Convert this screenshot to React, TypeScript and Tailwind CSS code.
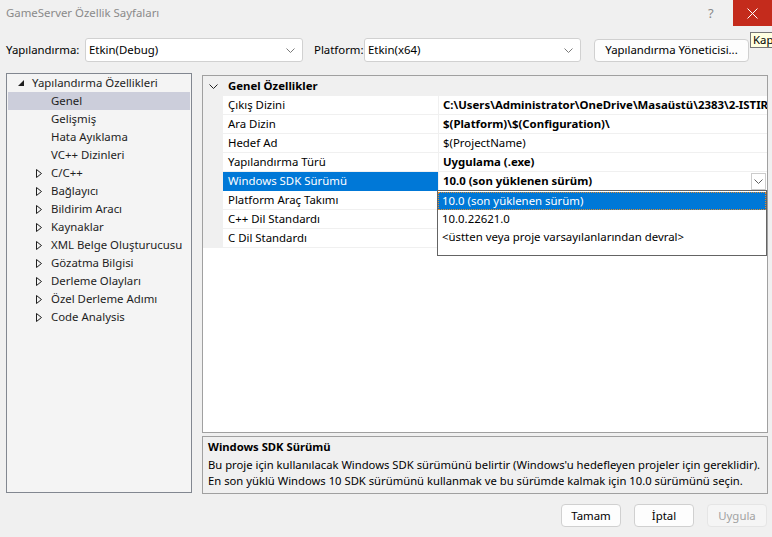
const treeItems: { label: string; level: 0 | 1; expandable: boolean; selected?: boolean }[] = [
  { label: "Yapılandırma Özellikleri", level: 0, expandable: true },
  { label: "Genel", level: 1, expandable: false, selected: true },
  { label: "Gelişmiş", level: 1, expandable: false },
  { label: "Hata Ayıklama", level: 1, expandable: false },
  { label: "VC++ Dizinleri", level: 1, expandable: false },
  { label: "C/C++", level: 1, expandable: true },
  { label: "Bağlayıcı", level: 1, expandable: true },
  { label: "Bildirim Aracı", level: 1, expandable: true },
  { label: "Kaynaklar", level: 1, expandable: true },
  { label: "XML Belge Oluşturucusu", level: 1, expandable: true },
  { label: "Gözatma Bilgisi", level: 1, expandable: true },
  { label: "Derleme Olayları", level: 1, expandable: true },
  { label: "Özel Derleme Adımı", level: 1, expandable: true },
  { label: "Code Analysis", level: 1, expandable: true },
];

const props: { name: string; value: string; bold: boolean; active?: boolean }[] = [
  {
    name: "Çıkış Dizini",
    value: "C:\\Users\\Administrator\\OneDrive\\Masaüstü\\2383\\2-ISTIRAK\\GameServer\\",
    bold: true,
  },
  { name: "Ara Dizin", value: "$(Platform)\\$(Configuration)\\", bold: true },
  { name: "Hedef Ad", value: "$(ProjectName)", bold: false },
  { name: "Yapılandırma Türü", value: "Uygulama (.exe)", bold: true },
  { name: "Windows SDK Sürümü", value: "10.0 (son yüklenen sürüm)", bold: true, active: true },
  { name: "Platform Araç Takımı", value: "", bold: false },
  { name: "C++ Dil Standardı", value: "", bold: false },
  { name: "C Dil Standardı", value: "", bold: false },
];

const Chevron = ({ className = "" }: { className?: string }) => (
  <svg width="9" height="5" viewBox="0 0 9 5" className={className}>
    <path d="M0.5 0.5 L4.5 4.5 L8.5 0.5" fill="none" stroke="currentColor" strokeWidth="1" />
  </svg>
);

const Combo = ({ text, width }: { text: string; width: string }) => (
  <div
    className={`${width} h-[24px] shrink-0 flex items-center justify-between bg-white border border-[#d1d1d1] rounded-[3px] pl-[3px] pr-[7px]`}
  >
    <span className="text-black">{text}</span>
    <Chevron className="text-[#7a7a7a]" />
  </div>
);

const Button = ({ label, disabled }: { label: string; disabled?: boolean }) => (
  <div
    className={`w-[60px] h-[23px] flex items-center justify-center rounded-[4px] border ${
      disabled ? "bg-[#f5f5f5] border-[#e5e5e5] text-[#a2a2a2]" : "bg-[#fdfdfd] border-[#d0d0d0] text-black"
    }`}
  >
    {label}
  </div>
);

export default function App() {
  return (
    <div className="w-[772px] h-[537px] relative overflow-hidden bg-[#f0f0f0] text-[11.4px] leading-[16px] font-['Noto_Sans',sans-serif] text-[#1e1e1e]">
      {/* title bar */}
      <div className="h-[26px] flex items-center">
        <span className="pl-[6px] text-[#8a8a8a] flex-1">GameServer Özellik Sayfaları</span>
        <span className="w-[14px] mr-[11px] text-[#8a8a8a] text-[13px]">?</span>
        <div className="w-[39px] h-[26px] bg-[#c42b1c] flex items-center justify-center">
          <svg width="11" height="11" viewBox="0 0 11 11">
            <path d="M0.5 0.5 L10.5 10.5 M10.5 0.5 L0.5 10.5" stroke="white" strokeWidth="1" />
          </svg>
        </div>
      </div>

      {/* configuration toolbar */}
      <div className="mt-[12px] h-[24px] flex items-center">
        <span className="w-[85px] shrink-0 pl-[6px] text-black whitespace-nowrap">Yapılandırma:</span>
        <Combo text="Etkin(Debug)" width="w-[218px]" />
        <span className="w-[61px] shrink-0 pl-[11px] text-black whitespace-nowrap">Platform:</span>
        <Combo text="Etkin(x64)" width="w-[217px]" />
        <div className="ml-[13px] w-[155px] shrink-0 h-[23px] flex items-center justify-center bg-[#fdfdfd] border border-[#d0d0d0] rounded-[4px] text-black whitespace-nowrap">
          Yapılandırma Yöneticisi...
        </div>
      </div>

      {/* main area */}
      <div className="mt-[11px] flex">
        <div className="ml-[6px] w-[186px] h-[420px] border border-[#828790] bg-[#f4f4f4] px-[1px]">
          {treeItems.map((item) => (
            <div
              key={item.label}
              className={`h-[18px] flex items-center ${item.selected ? "bg-[#cccedb]" : ""} ${
                item.level === 0 ? "pl-[10px]" : item.expandable ? "pl-[28px]" : "pl-[43px]"
              }`}
            >
              {item.level === 0 && (
                <svg width="6" height="6" viewBox="0 0 6 6" className="mr-[8px]">
                  <path d="M6 0 L6 6 L0 6 Z" fill="#1e1e1e" />
                </svg>
              )}
              {item.level === 1 && item.expandable && (
                <svg width="6" height="9" viewBox="0 0 6 9" className="mr-[9px]">
                  <path d="M0.5 0.5 L5.5 4.5 L0.5 8.5 Z" fill="none" stroke="#1e1e1e" strokeWidth="1" />
                </svg>
              )}
              <span className="whitespace-nowrap">{item.label}</span>
            </div>
          ))}
        </div>

        <div className="ml-[10px] w-[566px] pt-[2px] flex flex-col">
          {/* property grid */}
          <div className="h-[358px] border border-[#a0a0a0] bg-white flex flex-col">
            <div className="h-[20px] flex items-center bg-[#f0f0f0]">
              <Chevron className="ml-[6px] text-[#222222]" />
              <span className="ml-[10px] font-bold text-black">Genel Özellikler</span>
            </div>
            {props.map((p) => (
              <div key={p.name} className="h-[19px] flex">
                <div className="w-[20px] bg-[#f0f0f0]" />
                <div
                  className={`w-[215px] pl-[5px] flex items-center border-b whitespace-nowrap ${
                    p.active ? "bg-[#0078d7] text-white border-[#0078d7]" : "text-black border-[#f0f0f0]"
                  }`}
                >
                  {p.name}
                </div>
                <div className="flex-1 min-w-0 pl-[4px] pr-[1px] flex items-center justify-between border-l border-b border-[#f0f0f0] overflow-hidden text-black">
                  <span className={`whitespace-nowrap ${p.bold ? "font-bold" : ""}`}>{p.value}</span>
                  {p.active && (
                    <div className="w-[15px] h-[17px] shrink-0 border border-[#cccccc] bg-white flex items-center justify-center">
                      <Chevron className="text-[#606060]" />
                    </div>
                  )}
                </div>
              </div>
            ))}
          </div>

          {/* description */}
          <div className="mt-[3px] h-[58px] border border-[#a0a0a0] bg-[#f0f0f0] px-[5px] pt-[2px] text-black text-[11.25px]">
            <div className="font-bold mb-[2px]">Windows SDK Sürümü</div>
            <div className="whitespace-nowrap">
              Bu proje için kullanılacak Windows SDK sürümünü belirtir (Windows'u hedefleyen projeler için gereklidir).
            </div>
            <div className="whitespace-nowrap">
              En son yüklü Windows 10 SDK sürümünü kullanmak ve bu sürümde kalmak için 10.0 sürümünü seçin.
            </div>
          </div>
        </div>
      </div>

      {/* dialog buttons */}
      <div className="mt-[10px] flex justify-end gap-[13px] pr-[5px]">
        <Button label="Tamam" />
        <Button label="İptal" />
        <Button label="Uygula" disabled />
      </div>

      {/* open dropdown list */}
      <div className="absolute left-[437px] top-[190px] w-[330px] h-[66px] border border-[#646464] bg-white pt-[1px] text-black">
        <div className="h-[18px] flex items-center pl-[3px] bg-[#0078d7] text-white border border-dotted border-[#e08a2c]">
          10.0 (son yüklenen sürüm)
        </div>
        <div className="h-[18px] flex items-center pl-[4px]">10.0.22621.0</div>
        <div className="h-[18px] flex items-center pl-[4px]">&lt;üstten veya proje varsayılanlarından devral&gt;</div>
      </div>

      {/* tooltip, clipped by the window edge */}
      <div className="absolute left-[750px] top-[32px] h-[16px] pl-[2px] pr-[4px] border border-[#767676] bg-[#ffffe1] text-black leading-[14px] whitespace-nowrap">
        Kapat
      </div>
    </div>
  );
}
